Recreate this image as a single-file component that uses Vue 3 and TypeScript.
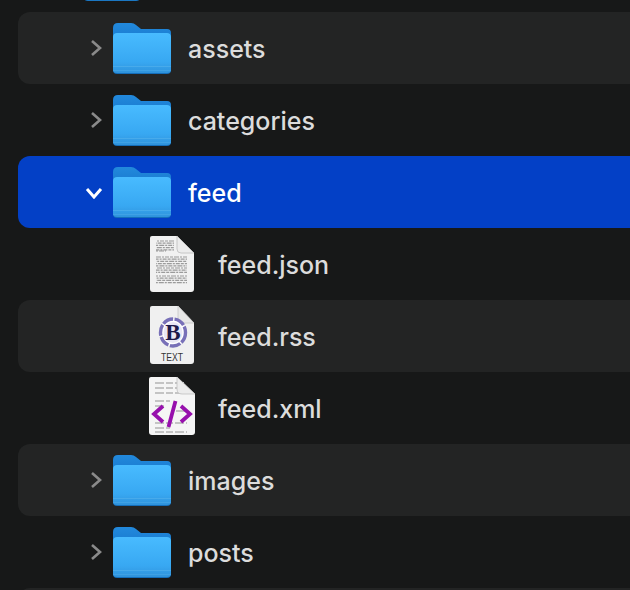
<script setup lang="ts">
type Row = {
  name: string
  kind: 'folder' | 'json' | 'rss' | 'xml'
  depth: number
  open?: boolean
  selected?: boolean
}

const rows: Row[] = [
  { name: '', kind: 'folder', depth: 0 },
  { name: 'assets', kind: 'folder', depth: 1 },
  { name: 'categories', kind: 'folder', depth: 1 },
  { name: 'feed', kind: 'folder', depth: 1, open: true, selected: true },
  { name: 'feed.json', kind: 'json', depth: 2 },
  { name: 'feed.rss', kind: 'rss', depth: 2 },
  { name: 'feed.xml', kind: 'xml', depth: 2 },
  { name: 'images', kind: 'folder', depth: 1 },
  { name: 'posts', kind: 'folder', depth: 1 },
  { name: '', kind: 'folder', depth: 1 },
]

// dashes that stand in for the tiny text on the document thumbnail
const jsonLines: { y: number; w: number; offset: number }[] = []
for (const [from, to, w] of [[5, 14, 18], [15, 17, 10], [21, 30, 31], [32, 37, 31], [40, 48, 31]]) {
  for (let y = from; y < to; y += 2.2) jsonLines.push({ y, w, offset: (y * 7) % 13 })
}

const xmlLines = [
  { y: 6, x: 6, w: 30 }, { y: 11, x: 6, w: 24 }, { y: 16, x: 6, w: 32 },
  { y: 24, x: 6, w: 15 }, { y: 29, x: 6, w: 11 }, { y: 34, x: 27, w: 10 },
  { y: 46, x: 6, w: 32 }, { y: 51, x: 6, w: 15 }, { y: 55, x: 6, w: 32 },
]
</script>

<template>
  <div class="finder-list">
    <div
      v-for="(row, i) in rows"
      :key="i"
      class="row"
      :class="{
        'row--selected': row.selected,
        'row--depth0': row.depth === 0,
        'row--file': row.depth === 2,
      }"
    >
      <template v-if="row.kind === 'folder'">
        <svg class="chevron" :class="{ 'chevron--open': row.open }" viewBox="0 0 12 18">
          <path d="M2 2 L10 9 L2 16" />
        </svg>
        <svg class="folder" viewBox="0 0 58 51">
          <defs>
            <linearGradient :id="`front${i}`" x1="0" y1="0" x2="0" y2="1">
              <stop offset="0" stop-color="#48bbff" />
              <stop offset="0.72" stop-color="#38a8f2" />
              <stop offset="1" stop-color="#2f93dc" />
            </linearGradient>
            <linearGradient :id="`back${i}`" x1="0" y1="0" x2="0" y2="1">
              <stop offset="0" stop-color="#2289dc" />
              <stop offset="1" stop-color="#1270c6" />
            </linearGradient>
          </defs>
          <path
            d="M0 5 Q0 0 5 0 H18 Q21 0 23 2 L28 6 H54 Q58 6 58 10 V30 H0 Z"
            :fill="`url(#back${i})`"
          />
          <rect y="10" width="58" height="41" rx="4" fill="#146eba" />
          <path
            d="M4 10 H54 Q58 10 58 14 V46.5 Q58 50 54 50 H4 Q0 50 0 46.5 V14 Q0 10 4 10 Z"
            :fill="`url(#front${i})`"
          />
          <rect y="43" width="58" height="1" fill="#6dc0f2" opacity="0.35" />
          <rect y="47" width="58" height="1" fill="#6dc0f2" opacity="0.25" />
        </svg>
      </template>

      <svg v-else-if="row.kind === 'json'" class="doc doc--json" viewBox="0 0 44 56">
        <path d="M2 0 H27 L44 17 V53 Q44 56 41 56 H3 Q0 56 0 53 V2 Q0 0 2 0 Z" fill="#f1f1f1" />
        <line
          v-for="l in jsonLines"
          :key="l.y"
          x1="6"
          :x2="6 + l.w"
          :y1="l.y"
          :y2="l.y"
          stroke="#555"
          stroke-width="1.2"
          stroke-dasharray="3 1 5 1 2 1 4 1"
          :stroke-dashoffset="l.offset"
          opacity="0.55"
        />
        <path d="M27 0 L44 17 H31 Q27 17 27 13 Z" fill="#ececec" stroke="#bdbdbd" stroke-width="0.8" />
      </svg>

      <svg v-else-if="row.kind === 'rss'" class="doc doc--rss" viewBox="0 0 44 58">
        <path d="M2 0 H28 L44 17 V55 Q44 58 41 58 H3 Q0 58 0 55 V2 Q0 0 2 0 Z" fill="#f0f0f0" />
        <path d="M28 0 L44 17 H32 Q28 17 28 13 Z" fill="#e8e8e8" stroke="#c4c4c4" stroke-width="0.8" />
        <ellipse cx="23" cy="26.5" rx="12.5" ry="13.5" fill="#fff" stroke="#7870b8" stroke-width="3.4" stroke-dasharray="11 1.5" />
        <ellipse cx="23" cy="26.5" rx="9.5" ry="10.5" fill="#e9e7f5" />
        <text x="23" y="34" class="doc-b">B</text>
        <text x="22" y="55" class="doc-label" textLength="22" lengthAdjust="spacingAndGlyphs">TEXT</text>
      </svg>

      <svg v-else class="doc doc--xml" viewBox="0 0 46 58">
        <path d="M2 0 H28 L46 17 V55 Q46 58 43 58 H3 Q0 58 0 55 V2 Q0 0 2 0 Z" fill="#f5f5f5" />
        <line
          v-for="l in xmlLines"
          :key="l.y"
          :x1="l.x"
          :x2="l.x + l.w"
          :y1="l.y"
          :y2="l.y"
          stroke="#c4c4c4"
          stroke-width="2"
          stroke-dasharray="9 2 7 2"
        />
        <path d="M28 0 L46 17 H33 Q28 17 28 12 Z" fill="#ececec" stroke="#c0c0c0" stroke-width="0.8" />
        <path
          d="M14 29 L5 37 L14 45 M32 29 L41 37 L32 45 M26.5 24 L19.5 50"
          fill="none"
          stroke="#9710ad"
          stroke-width="3.8"
        />
      </svg>

      <span class="name">{{ row.name }}</span>
    </div>
  </div>
</template>

<style scoped>
.finder-list {
  width: 630px;
  height: 590px;
  overflow: hidden;
  background: #171818;
  font-family: Inter, "Liberation Sans", sans-serif;
}

.row {
  --indent: 113px;
  height: 72px;
  margin-left: 18px;
  display: flex;
  align-items: center;
  padding-left: calc(var(--indent) - 18px);
  border-radius: 12px 0 0 12px;
  position: relative;
}
.row:first-child {
  margin-top: -60px;
}
.row:nth-child(even) {
  background: #232424;
}
.row--depth0 {
  --indent: 84px;
}
.row--file {
  padding-left: 132px;
}

.row--selected {
  background: #0340c6 !important;
}
.row--selected .name {
  color: #fff;
}

.chevron {
  position: absolute;
  left: 72px;
  top: 27px;
  width: 12px;
  height: 18px;
  fill: none;
  stroke: #8a8a8a;
  stroke-width: 2.6;
}
.chevron--open {
  left: 70px;
  top: 27.5px;
  stroke: #fff;
  stroke-width: 3;
  transform: rotate(90deg);
}
.row--depth0 .chevron {
  display: none;
}

.folder {
  width: 58px;
  height: 51px;
  flex: none;
  margin-top: 1px;
}
.row--depth0 .folder {
  width: 56px;
}

.doc {
  flex: none;
}
.doc--json {
  width: 44px;
  height: 56px;
}
.doc--rss {
  width: 44px;
  height: 58px;
  margin-top: -2px;
}
.doc--xml {
  width: 46px;
  height: 58px;
  margin-left: -1px;
  margin-top: -4px;
}
.doc-b {
  font-family: "Liberation Serif", serif;
  font-weight: 700;
  font-size: 23px;
  fill: #1d1a4a;
  text-anchor: middle;
}
.doc-label {
  font-family: "Liberation Sans", sans-serif;
  font-size: 10px;
  fill: #333;
  text-anchor: middle;
}

.name {
  margin-left: 17px;
  margin-top: 2px;
  font-size: 25px;
  font-weight: 500;
  color: #dcdcdc;
  line-height: 1;
  white-space: nowrap;
}
.row--file .name {
  margin-left: 24px;
}
.row--file .doc--xml + .name {
  margin-left: 23px;
}
</style>
